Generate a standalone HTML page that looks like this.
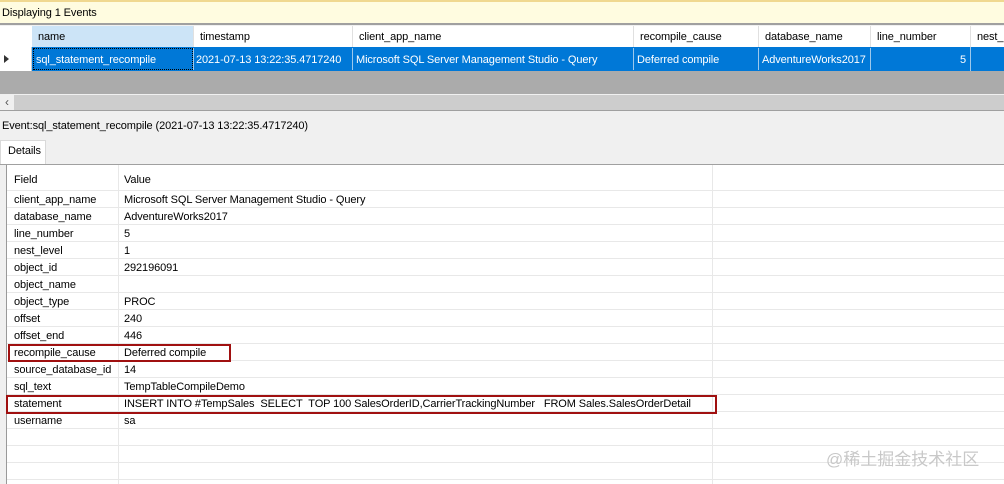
<html><head><style>
body{margin:0;width:1004px;height:484px;overflow:hidden;background:#f0f0f0;font-family:"Liberation Sans",Arial,sans-serif;font-size:11px;letter-spacing:-0.1px;color:#000;position:relative}
div{position:absolute;box-sizing:border-box}
.c{white-space:nowrap;padding-left:6px;line-height:24px;height:22px;overflow:hidden}
.r{position:absolute;left:0;width:998px;height:17px;border-bottom:1px solid #e8e8e8;font-size:11px;line-height:19px}
.r span{position:absolute;white-space:nowrap}
.r span:first-child{left:7px}.r span:last-child{left:117px}
</style></head><body>
<div style="left:0;top:0;width:1004px;height:25px;background:#fffce0;border-top:2px solid #f0d890;border-bottom:2px solid #a0a0a0;padding-left:2px;line-height:22px">Displaying 1 Events</div>
<div style="left:0;top:26px;width:1004px;height:21px;background:#fff"></div>
<div class="c" style="left:32px;top:26px;width:161px;height:21px;background:#cce4f7;line-height:23px">name</div>
<div class="c" style="left:193px;top:26px;width:159px;border-left:1px solid #e0e0e0;line-height:23px">timestamp</div>
<div class="c" style="left:352px;top:26px;width:281px;border-left:1px solid #e0e0e0;line-height:23px">client_app_name</div>
<div class="c" style="left:633px;top:26px;width:125px;border-left:1px solid #e0e0e0;line-height:23px">recompile_cause</div>
<div class="c" style="left:758px;top:26px;width:112px;border-left:1px solid #e0e0e0;line-height:23px">database_name</div>
<div class="c" style="left:870px;top:26px;width:100px;border-left:1px solid #e0e0e0;line-height:23px">line_number</div>
<div class="c" style="left:970px;top:26px;width:40px;border-left:1px solid #e0e0e0;line-height:23px">nest_</div>
<div style="left:0;top:47px;width:32px;height:24px;background:#fff;border-right:1px solid #ccc"><div style="left:4px;top:8px;width:0;height:0;border-left:5px solid #333;border-top:4px solid transparent;border-bottom:4px solid transparent"></div></div>
<div style="left:32px;top:47px;width:972px;height:24px;background:#0078d7;color:#fff"></div>
<div class="c" style="left:33px;top:48px;width:160px;border:1px dotted #000;color:#fff;padding-left:2px;line-height:22px">sql_statement_recompile</div>
<div class="c" style="left:193px;top:48px;width:159px;color:#fff;padding-left:2px;border-left:1px solid #9cc8ec">2021-07-13 13:22:35.4717240</div>
<div class="c" style="left:352px;top:48px;width:281px;color:#fff;padding-left:3px;border-left:1px solid #9cc8ec">Microsoft SQL Server Management Studio - Query</div>
<div class="c" style="left:633px;top:48px;width:125px;color:#fff;padding-left:3px;border-left:1px solid #9cc8ec">Deferred compile</div>
<div class="c" style="left:758px;top:48px;width:112px;color:#fff;padding-left:3px;border-left:1px solid #9cc8ec">AdventureWorks2017</div>
<div class="c" style="left:870px;top:48px;width:100px;color:#fff;text-align:right;padding-right:4px;border-left:1px solid #9cc8ec">5</div>
<div style="left:970px;top:47px;width:1px;height:24px;background:#9cc8ec"></div>
<div style="left:0;top:71px;width:1004px;height:23px;background:#ababab"></div>
<div style="left:0;top:95px;width:1004px;height:16px;background:#cdcdcd;border-bottom:1px solid #a0a0a0"></div>
<div style="left:0;top:95px;width:14px;height:15px;background:#f0f0f0;color:#555;font-size:12px;line-height:15px;text-align:center">&lsaquo;</div>
<div style="left:2px;top:118px;line-height:16px">Event:sql_statement_recompile (2021-07-13 13:22:35.4717240)</div>
<div style="left:0;top:140px;width:46px;height:25px;background:#fff;border:1px solid #d9d9d9;border-bottom:none;padding:4px 0 0 7px">Details</div>
<div style="left:0;top:164px;width:1004px;height:1px;background:#a0a0a0"></div>
<div style="left:6px;top:165px;width:998px;height:319px;background:#fff;border-left:1px solid #999">
<div style="left:111px;top:0;width:1px;height:319px;background:#e8e8e8"></div>
<div style="left:705px;top:0;width:1px;height:319px;background:#e8e8e8"></div>
<div class="r" style="top:5px;height:21px;line-height:21px"><span>Field</span><span>Value</span></div>
<div class="r" style="top:26px"><span>client_app_name</span><span>Microsoft SQL Server Management Studio - Query</span></div>
<div class="r" style="top:43px"><span>database_name</span><span>AdventureWorks2017</span></div>
<div class="r" style="top:60px"><span>line_number</span><span>5</span></div>
<div class="r" style="top:77px"><span>nest_level</span><span>1</span></div>
<div class="r" style="top:94px"><span>object_id</span><span>292196091</span></div>
<div class="r" style="top:111px"><span>object_name</span><span></span></div>
<div class="r" style="top:128px"><span>object_type</span><span>PROC</span></div>
<div class="r" style="top:145px"><span>offset</span><span>240</span></div>
<div class="r" style="top:162px"><span>offset_end</span><span>446</span></div>
<div class="r" style="top:179px"><span>recompile_cause</span><span>Deferred compile</span></div>
<div class="r" style="top:196px"><span>source_database_id</span><span>14</span></div>
<div class="r" style="top:213px"><span>sql_text</span><span>TempTableCompileDemo</span></div>
<div class="r" style="top:230px"><span>statement</span><span>INSERT INTO #TempSales&nbsp; SELECT&nbsp; TOP 100 SalesOrderID,CarrierTrackingNumber&nbsp;&nbsp; FROM Sales.SalesOrderDetail</span></div>
<div class="r" style="top:247px"><span>username</span><span>sa</span></div>
<div class="r" style="top:264px"><span></span><span></span></div>
<div class="r" style="top:281px"><span></span><span></span></div>
<div class="r" style="top:298px"><span></span><span></span></div>
</div>
<div style="left:8px;top:344px;width:223px;height:18px;border:2px solid #a01010"></div>
<div style="left:6px;top:395px;width:711px;height:19px;border:2px solid #a01010"></div>
<div style="left:826px;top:445px;color:#c8c8c8;font-size:17px;letter-spacing:0;font-family:'Liberation Sans','Noto Sans CJK SC',sans-serif">@稀土掘金技术社区</div>
</body></html>
